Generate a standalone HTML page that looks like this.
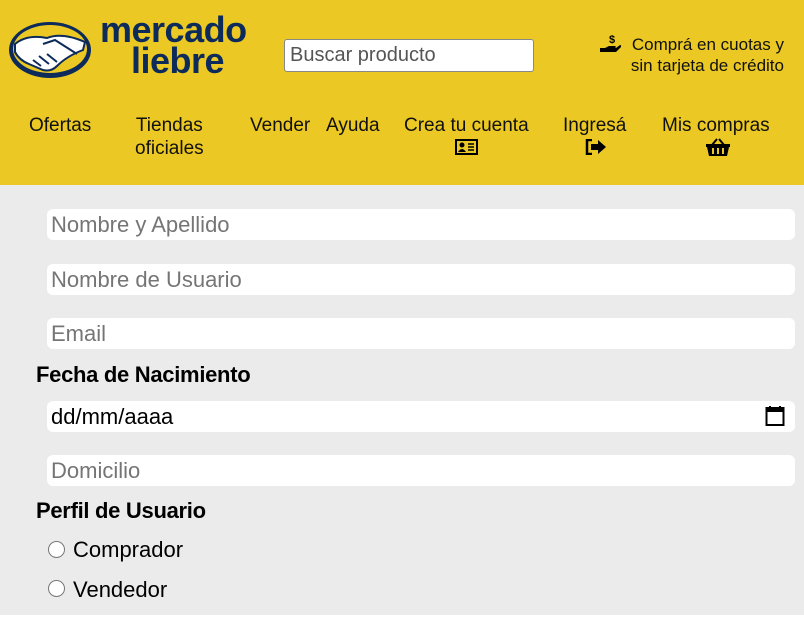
<!DOCTYPE html>
<html><head><meta charset="utf-8"><style>
*{margin:0;padding:0;box-sizing:border-box}
body{width:804px;height:631px;background:#fff;font-family:"Liberation Sans",Arial,sans-serif;position:relative;overflow:hidden}
.hdr{position:absolute;left:0;top:0;width:804px;height:185px;background:#ebc823}
.main{position:absolute;left:0;top:185px;width:804px;height:430px;background:#ebebeb}
.a{position:absolute}
.nav{position:absolute;font-size:19px;color:#111;text-align:center;line-height:23px}
.inp{position:absolute;left:47px;width:748px;height:31px;background:#fff;border-radius:6px;font-size:22px;color:#757575;padding-left:4px;line-height:31px}
.lbl{position:absolute;left:36px;font-size:22px;font-weight:bold;color:#000;letter-spacing:-0.3px}
.rad{position:absolute;left:48px;width:17px;height:17px;border:1.5px solid #777;border-radius:50%;background:#fff}
.rt{position:absolute;left:73px;font-size:22px;color:#000}
</style></head><body>
<div class="hdr">
<svg class="a" style="left:7px;top:20px" width="86" height="60" viewBox="0 0 86 60">
<ellipse cx="43" cy="30" rx="41" ry="28" fill="#0d2b5a"/>
<ellipse cx="43" cy="29" rx="37" ry="24" fill="#ebc823"/>
<path d="M8 24 Q20 14 40 18 Q55 12 78 22 L76 30 Q60 36 50 46 Q44 52 36 50 L22 44 Q12 40 8 32Z" fill="#fff" stroke="#0d2b5a" stroke-width="2"/>
<path d="M36 24 L48 20 L70 34 M26 40 L34 46 M32 36 L42 44 M40 34 L50 42" stroke="#0d2b5a" stroke-width="2" fill="none"/>
</svg>
<div class="a" style="left:100px;top:14px;font-size:36px;font-weight:bold;color:#0d2b5a;line-height:31px;letter-spacing:-0.5px">mercado<br><span style="margin-left:31px">liebre</span></div>
<div class="a" style="left:284px;top:39px;width:250px;height:33px;background:#fff;border:1px solid #888;border-radius:3px;font-size:20px;color:#555;padding-left:5px;line-height:31px">Buscar producto</div>
<svg class="a" style="left:599px;top:34px" width="22" height="20" viewBox="0 0 22 20"><text x="10" y="9" font-size="11" font-weight="bold" font-family="Liberation Sans">$</text><path d="M1 14h5l4 -2h6c1 0 1 2 0 2h-5h6l4-3c1 0 2 1 1 2l-5 5H1Z"/></svg>
<div class="a" style="left:598px;top:34px;font-size:17px;color:#111;text-align:right;width:186px;line-height:21px">Comprá en cuotas y<br>sin tarjeta de crédito</div>
<div class="nav" style="left:29px;top:114px">Ofertas</div>
<div class="nav" style="left:135px;top:114px">Tiendas<br>oficiales</div>
<div class="nav" style="left:250px;top:114px">Vender</div>
<div class="nav" style="left:326px;top:114px">Ayuda</div>
<div class="nav" style="left:404px;top:114px">Crea tu cuenta</div>
<svg class="a" style="left:455px;top:139px" width="23" height="16" viewBox="0 0 23 16"><rect x="1" y="1" width="21" height="14" fill="none" stroke="#000" stroke-width="2"/><circle cx="7" cy="6" r="2.5"/><path d="M3 13 Q7 7 11 13Z"/><path d="M13 5h6M13 8h6M13 11h6" stroke="#000" stroke-width="1.5"/></svg>
<div class="nav" style="left:563px;top:114px">Ingresá</div>
<svg class="a" style="left:585px;top:139px" width="22" height="16" viewBox="0 0 22 16"><path d="M7 1H2v14h5" fill="none" stroke="#000" stroke-width="2.5"/><path d="M6 5h7V1l8 7-8 7v-4H6Z"/></svg>
<div class="nav" style="left:662px;top:114px">Mis compras</div>
<svg class="a" style="left:706px;top:138px" width="24" height="18" viewBox="0 0 24 18"><path d="M6 7 L11 1 M18 7 L13 1" stroke="#000" stroke-width="2"/><path d="M0 6h24v3h-1l-2 9H3L1 9H0Z"/><path d="M7 10v6M12 10v6M17 10v6" stroke="#ebc823" stroke-width="2"/></svg>
</div>
<div class="main"></div>
<div class="inp" style="top:209px">Nombre y Apellido</div>
<div class="inp" style="top:264px">Nombre de Usuario</div>
<div class="inp" style="top:318px">Email</div>
<div class="lbl" style="top:362px">Fecha de Nacimiento</div>
<div class="inp" style="top:401px;color:#000">dd/mm/aaaa</div>
<svg class="a" style="left:765px;top:405px" width="20" height="22" viewBox="0 0 20 22"><rect x="1.5" y="3" width="17" height="17" fill="none" stroke="#000" stroke-width="2"/><rect x="1.5" y="3" width="17" height="4"/><path d="M5 1v4M15 1v4" stroke="#000" stroke-width="2"/></svg>
<div class="inp" style="top:455px">Domicilio</div>
<div class="lbl" style="top:498px">Perfil de Usuario</div>
<div class="rad" style="top:541px"></div><div class="rt" style="top:537px">Comprador</div>
<div class="rad" style="top:580px"></div><div class="rt" style="top:577px">Vendedor</div>
</body></html>
